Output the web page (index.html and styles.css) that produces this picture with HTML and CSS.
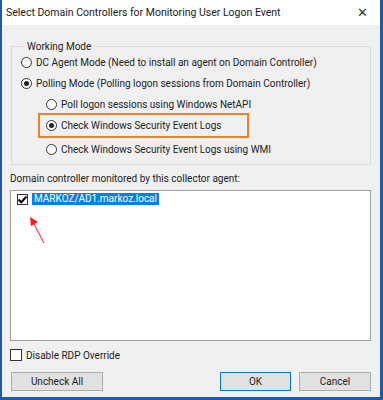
FILE: index.html
```html
<!DOCTYPE html>
<html lang="en">
<head>
    <meta charset="UTF-8">
    <title>Select Domain Controllers for Monitoring User Logon Event</title>
    <link rel="stylesheet" href="styles.css">
</head>
<body>
    <div class="window">
        <div class="titlebar">
            <span class="title">Select Domain Controllers for Monitoring User Logon Event</span>
            <span class="close">&#x2715;</span>
        </div>
        <div class="content">
            <fieldset class="group">
                <legend>Working Mode</legend>
                <div class="option"><span class="radio"></span>DC Agent Mode (Need to install an agent on Domain Controller)</div>
                <div class="option"><span class="radio checked"></span>Polling Mode (Polling logon sessions from Domain Controller)</div>
                <div class="suboptions">
                    <div class="option"><span class="radio"></span>Poll logon sessions using Windows NetAPI</div>
                    <div class="option marked"><span class="radio checked"></span>Check Windows Security Event Logs</div>
                    <div class="option"><span class="radio"></span>Check Windows Security Event Logs using WMI</div>
                </div>
            </fieldset>

            <div class="list-label">Domain controller monitored by this collector agent:</div>
            <div class="listbox">
                <div class="list-item">
                    <span class="checkbox checked">
                        <svg width="11" height="11" viewBox="0 0 11 11"><path d="M1.5 5.5 L4.3 8.2 L9.5 2.5" fill="none" stroke="#000" stroke-width="2"/></svg>
                    </span>
                    <span class="selected">MARKOZ/AD1.markoz.local</span>
                </div>
                <svg class="arrow" width="24" height="30" viewBox="0 0 24 30">
                    <line x1="16" y1="27" x2="5" y2="6" stroke="#f04848" stroke-width="1.2"/>
                    <polygon points="2,1 10,6 3,10" fill="#ff1a1a"/>
                </svg>
            </div>

            <label class="check-row"><span class="checkbox"></span>Disable RDP Override</label>

            <div class="buttons">
                <button class="btn wide">Uncheck All</button>
                <div class="right-buttons">
                    <button class="btn default">OK</button>
                    <button class="btn">Cancel</button>
                </div>
            </div>
        </div>
    </div>
</body>
</html>
```

FILE: styles.css
```css
body {
    margin: 0;
    font-family: Roboto, "Noto Sans", sans-serif;
    font-size: 10px;
    color: #000;
    background: #1e5aa8;
}
.window {
    width: 378px;
    height: 397px;
    border-left: 2px solid #1e5aa8;
    border-right: 3px solid #1e5aa8;
    border-bottom: 3px solid #1e5aa8;
    background: #f0f0f0;
    display: flex;
    flex-direction: column;
}
.titlebar {
    height: 25px;
    background: #fff;
    display: flex;
    align-items: center;
    justify-content: space-between;
    padding: 0 12px 0 4px;
}
.title {
    font-size: 10.5px;
    color: #1a1a1a;
}
.close {
    font-size: 13px;
    color: #333;
}
.content {
    flex: 1;
    padding: 0 9px 0 8px;
    display: flex;
    flex-direction: column;
}
.group {
    margin: 16px 0 0 1px;
    padding: 0 0 4px 9px;
    border: 1px solid #dcdcdc;
}
.group legend {
    padding: 0 2px;
    margin-left: 4px;
    color: #222;
}
.option {
    height: 21px;
    display: flex;
    align-items: center;
    color: #222;
}
.radio {
    width: 11px;
    height: 11px;
    border: 1px solid #333;
    border-radius: 50%;
    background: #fff;
    margin-right: 4px;
    box-sizing: border-box;
    position: relative;
}
.radio.checked::after {
    content: "";
    position: absolute;
    left: 2px;
    top: 2px;
    width: 5px;
    height: 5px;
    border-radius: 50%;
    background: #222;
}
.suboptions {
    margin-left: 25px;
}
.option.marked {
    width: fit-content;
    margin-left: -6px;
    padding: 0 25px 0 6px;
    outline: 2px solid #ef7f2a;
    outline-offset: 0;
    margin-bottom: 3px;
}
.list-label {
    margin-top: 3px;
    height: 20px;
    display: flex;
    align-items: center;
    color: #222;
}
.listbox {
    margin-top: 2px;
    height: 149px;
    background: #fff;
    border: 1px solid #a0a0a0;
    position: relative;
}
.list-item {
    display: flex;
    align-items: center;
    padding: 2px 0 0 6px;
}
.checkbox {
    width: 11px;
    height: 11px;
    border: 1px solid #333;
    background: #fff;
    display: inline-flex;
    box-sizing: border-box;
    margin-right: 4px;
}
.checkbox svg {
    margin: -1px;
}
.selected {
    background: #0a7ee6;
    color: #fff;
    padding: 0 2px;
    line-height: 12px;
}
.arrow {
    position: absolute;
    left: 17px;
    top: 25px;
}
.check-row {
    display: flex;
    align-items: center;
    margin-top: 8px;
    height: 12px;
    color: #222;
}
.check-row .checkbox {
    width: 12px;
    height: 12px;
}
.buttons {
    display: flex;
    justify-content: space-between;
    margin-top: 11px;
    padding-left: 1px;
}
.right-buttons {
    display: flex;
    gap: 8px;
}
.btn {
    font-family: inherit;
    font-size: 10px;
    color: #222;
    height: 19px;
    width: 72px;
    padding: 0;
    background: #e1e1e1;
    border: 1px solid #adadad;
}
.btn.wide {
    width: 92px;
}
.btn.default {
    width: 71px;
    border-color: #0078d7;
}
```
